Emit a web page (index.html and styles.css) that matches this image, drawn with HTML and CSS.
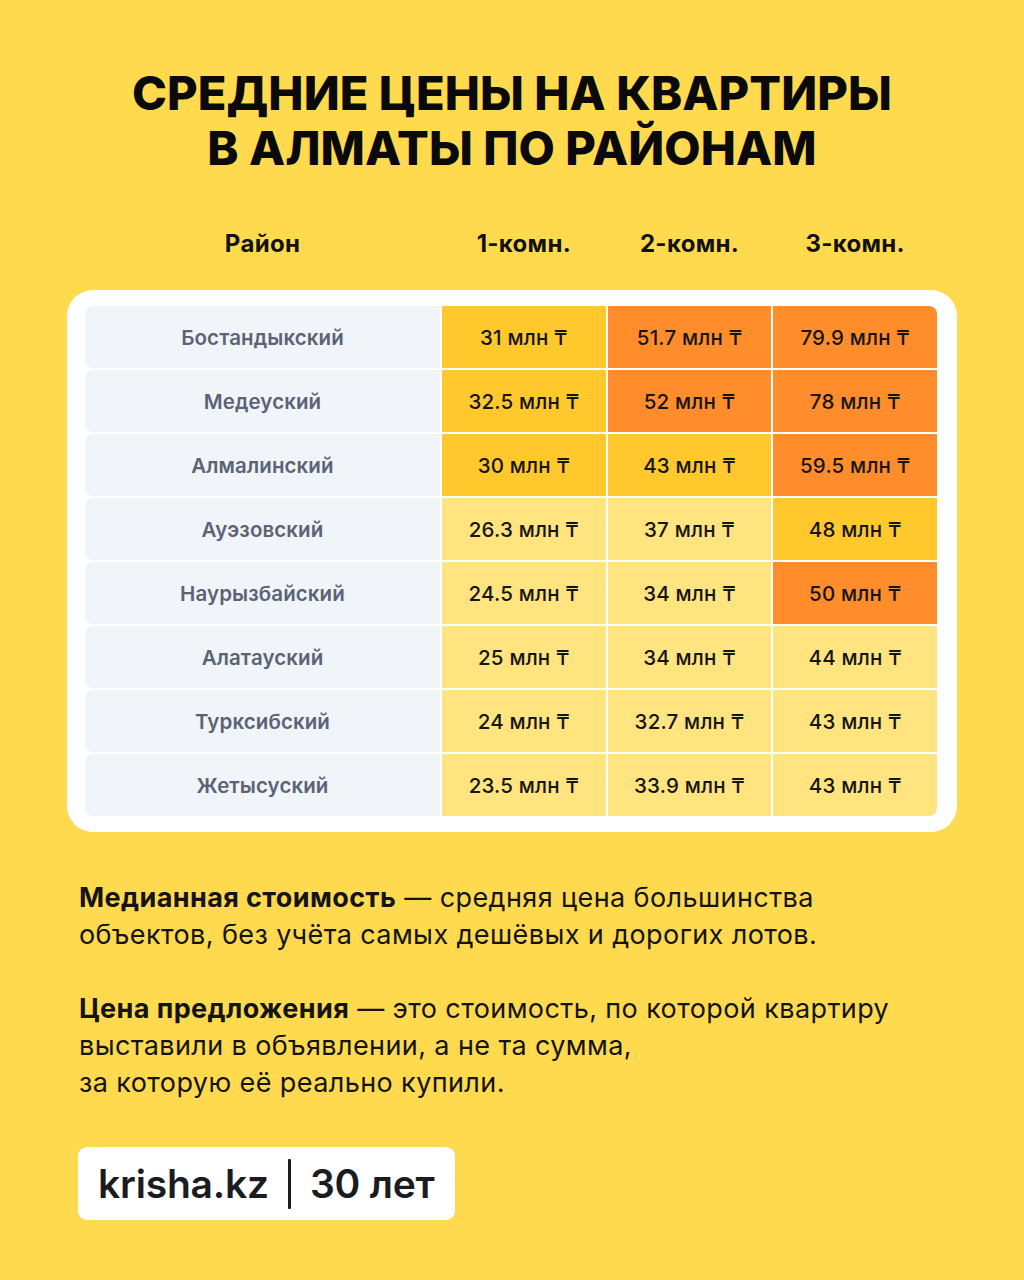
FILE: index.html
```html
<!DOCTYPE html>
<html lang="ru">
<head>
<meta charset="utf-8">
<title>Средние цены на квартиры в Алматы</title>
<link rel="stylesheet" href="styles.css">
</head>
<body>
<main class="page">
  <h1 class="title">СРЕДНИЕ ЦЕНЫ НА КВАРТИРЫ<br>В АЛМАТЫ ПО РАЙОНАМ</h1>

  <div class="head">
    <div>Район</div>
    <div>1-комн.</div>
    <div>2-комн.</div>
    <div>3-комн.</div>
  </div>

  <section class="card">
    <div class="grid">
      <div class="d">Бостандыкский</div><div class="c m">31 млн ₸</div><div class="c o">51.7 млн ₸</div><div class="c o tr">79.9 млн ₸</div>
      <div class="d">Медеуский</div><div class="c m">32.5 млн ₸</div><div class="c o">52 млн ₸</div><div class="c o">78 млн ₸</div>
      <div class="d">Алмалинский</div><div class="c m">30 млн ₸</div><div class="c m">43 млн ₸</div><div class="c o">59.5 млн ₸</div>
      <div class="d">Ауэзовский</div><div class="c l">26.3 млн ₸</div><div class="c l">37 млн ₸</div><div class="c m">48 млн ₸</div>
      <div class="d">Наурызбайский</div><div class="c l">24.5 млн ₸</div><div class="c l">34 млн ₸</div><div class="c o">50 млн ₸</div>
      <div class="d">Алатауский</div><div class="c l">25 млн ₸</div><div class="c l">34 млн ₸</div><div class="c l">44 млн ₸</div>
      <div class="d">Турксибский</div><div class="c l">24 млн ₸</div><div class="c l">32.7 млн ₸</div><div class="c l">43 млн ₸</div>
      <div class="d">Жетысуский</div><div class="c l">23.5 млн ₸</div><div class="c l">33.9 млн ₸</div><div class="c l br">43 млн ₸</div>
    </div>
  </section>

  <section class="notes">
    <p><b>Медианная стоимость</b> — средняя цена большинства<br>объектов, без учёта самых дешёвых и дорогих лотов.</p>
    <p><b>Цена предложения</b> — это стоимость, по которой квартиру<br>выставили в объявлении, а не та сумма,<br>за которую её реально купили.</p>
  </section>

  <div class="logo">
    <span class="brand">krisha.kz</span>
    <span class="sep"></span>
    <span class="years">30 лет</span>
  </div>
</main>
</body>
</html>
```
FILE: styles.css
```css
html, body {
  margin: 0;
  padding: 0;
}
body {
  background: #ffda4f;
  font-family: Inter, "Noto Sans", "DejaVu Sans", sans-serif;
  color: #111;
  width: 1024px;
  height: 1280px;
  overflow: hidden;
}
.page {
  padding: 65px 0 0 0;
}
.title {
  margin: 0;
  text-align: center;
  font-size: 47px;
  line-height: 55px;
  font-weight: 800;
  letter-spacing: 0.1px;
  color: #0a0a0a;
}
.head {
  margin: 54px 87px 0 85px;
  display: grid;
  grid-template-columns: 355px 1fr 1fr 1fr;
  column-gap: 2px;
  font-size: 24px;
  font-weight: 700;
  text-align: center;
  line-height: 30px;
  letter-spacing: 0.3px;
}
.card {
  margin: 31px 67px 0 67px;
  background: #fff;
  border-radius: 26px;
  padding: 16px 20px 16px 18px;
}
.grid {
  display: grid;
  grid-template-columns: 355px 1fr 1fr 1fr;
  grid-auto-rows: 62px;
  gap: 2px;
}
.d, .c {
  display: flex;
  align-items: center;
  justify-content: center;
  font-weight: 600;
}
.d {
  background: #f1f4f8;
  color: #5b6377;
  border-radius: 8px 0 0 8px;
  font-size: 20.5px;
  letter-spacing: 0.1px;
}
.c {
  color: #151515;
  font-size: 20.5px;
  font-weight: 500;
  letter-spacing: 0.2px;
}
.o { background: #ff8d2b; }
.m { background: #ffc82d; }
.l { background: #ffe47f; }
.tr { border-top-right-radius: 8px; }
.br { border-bottom-right-radius: 8px; }
.notes {
  margin: 47px 0 0 79px;
  font-size: 27px;
  line-height: 37px;
  color: #141414;
  letter-spacing: 0.4px;
}
.notes p {
  margin: 0 0 37px 0;
}
.notes b {
  font-weight: 700;
}
.logo {
  margin: 46px 0 0 78px;
  width: 377px;
  height: 73px;
  background: #fff;
  border-radius: 9px;
  display: flex;
  align-items: center;
  box-sizing: border-box;
  padding-left: 20px;
  font-size: 39px;
  font-weight: 600;
  color: #1b1c22;
  letter-spacing: -0.2px;
}
.sep {
  width: 3px;
  height: 50px;
  background: #1b1c22;
  margin: 0 19px 0 19px;
  border-radius: 1px;
}
```
